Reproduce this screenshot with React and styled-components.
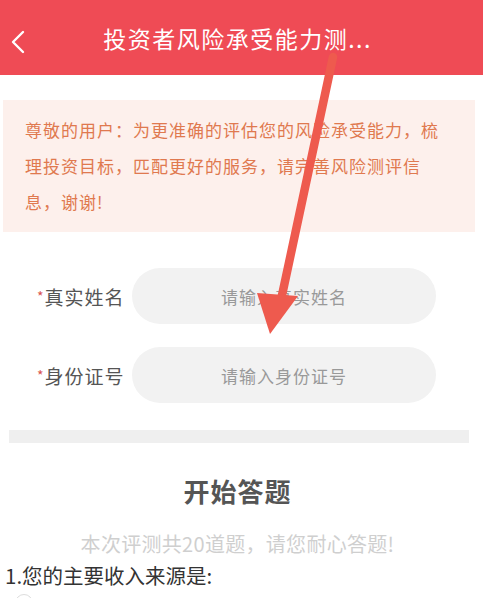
import React from "react";
import styled, { createGlobalStyle } from "styled-components";

const GlobalStyle = createGlobalStyle`
  html, body {
    margin: 0;
    padding: 0;
    background: #fff;
    font-family: "Noto Sans CJK SC", "Noto Sans", sans-serif;
  }
`;

const Page = styled.div`
  position: relative;
  width: 483px;
  height: 598px;
  overflow: hidden;
  background: #fff;
`;

const Header = styled.div`
  height: 75px;
  background: #ef4b55;
  display: flex;
  align-items: center;
  position: relative;
`;

const BackButton = styled.div`
  position: absolute;
  left: 8px;
  top: 28px;
  width: 22px;
  height: 28px;
`;

const Title = styled.div`
  flex: 1;
  text-align: center;
  color: #fff;
  font-size: 23px;
  letter-spacing: 1.5px;
  padding-right: 8px;
`;

const Notice = styled.div`
  margin: 25px 8px 0 3px;
  background: #fdf0ec;
  padding: 12px 30px 12px 22px;
  color: #e0794f;
  font-size: 17px;
  line-height: 36px;
  letter-spacing: 1px;
`;

const Form = styled.div`
  padding: 36px 0 27px 37px;
  display: flex;
  flex-direction: column;
  gap: 23px;
`;

const Row = styled.div`
  display: flex;
  align-items: center;
`;

const Label = styled.div`
  width: 95px;
  font-size: 19px;
  color: #555;
  letter-spacing: 1px;
  span {
    color: #d9534f;
    font-size: 14px;
    vertical-align: 3px;
  }
`;

const Input = styled.div`
  width: 304px;
  height: 56px;
  border-radius: 28px;
  background: #f2f2f2;
  display: flex;
  align-items: center;
  justify-content: center;
  color: #999;
  font-size: 17px;
  letter-spacing: 1px;
`;

const Divider = styled.div`
  margin: 0 14px 0 9px;
  height: 13px;
  background: #efefef;
`;

const SectionTitle = styled.div`
  text-align: center;
  font-weight: bold;
  font-size: 26px;
  color: #555;
  margin-top: 29px;
  letter-spacing: 1px;
  padding-right: 8px;
`;

const Subtitle = styled.div`
  text-align: center;
  font-size: 20px;
  letter-spacing: 0.3px;
  color: #cfcfcf;
  margin-top: 20px;
  padding-right: 8px;
`;

const Question = styled.div`
  font-size: 20.5px;
  color: #333;
  padding-left: 5px;
  margin-top: 2px;
`;

const Radio = styled.div`
  width: 16px;
  height: 16px;
  border-radius: 50%;
  border: 1px solid #ddd;
  margin: 4px 0 0 15px;
`;

const Arrow = styled.svg`
  position: absolute;
  left: 0;
  top: 0;
  pointer-events: none;
`;

export default function App() {
  return (
    <Page>
      <GlobalStyle />
      <Header>
        <BackButton>
          <svg width="22" height="28" viewBox="0 0 22 28">
            <path d="M15 4 L5 14 L15 24" stroke="#fff" strokeWidth="2.4" fill="none" strokeLinecap="round" strokeLinejoin="round" />
          </svg>
        </BackButton>
        <Title>投资者风险承受能力测...</Title>
      </Header>
      <Notice>
        尊敬的用户：为更准确的评估您的风险承受能力，梳理投资目标，匹配更好的服务，请完善风险测评信息，谢谢!
      </Notice>
      <Form>
        <Row>
          <Label><span>*</span>真实姓名</Label>
          <Input>请输入真实姓名</Input>
        </Row>
        <Row>
          <Label><span>*</span>身份证号</Label>
          <Input>请输入身份证号</Input>
        </Row>
      </Form>
      <Divider />
      <SectionTitle>开始答题</SectionTitle>
      <Subtitle>本次评测共20道题，请您耐心答题!</Subtitle>
      <Question>1.您的主要收入来源是:</Question>
      <Radio />
      <Arrow width="483" height="598" viewBox="0 0 483 598">
        <path d="M333 57 L281 300" stroke="#ee5a4e" strokeWidth="8.5" strokeLinecap="round" fill="none" />
        <path d="M257 293 L298 296 L270 334 Z" fill="#ee5a4e" />
      </Arrow>
    </Page>
  );
}
